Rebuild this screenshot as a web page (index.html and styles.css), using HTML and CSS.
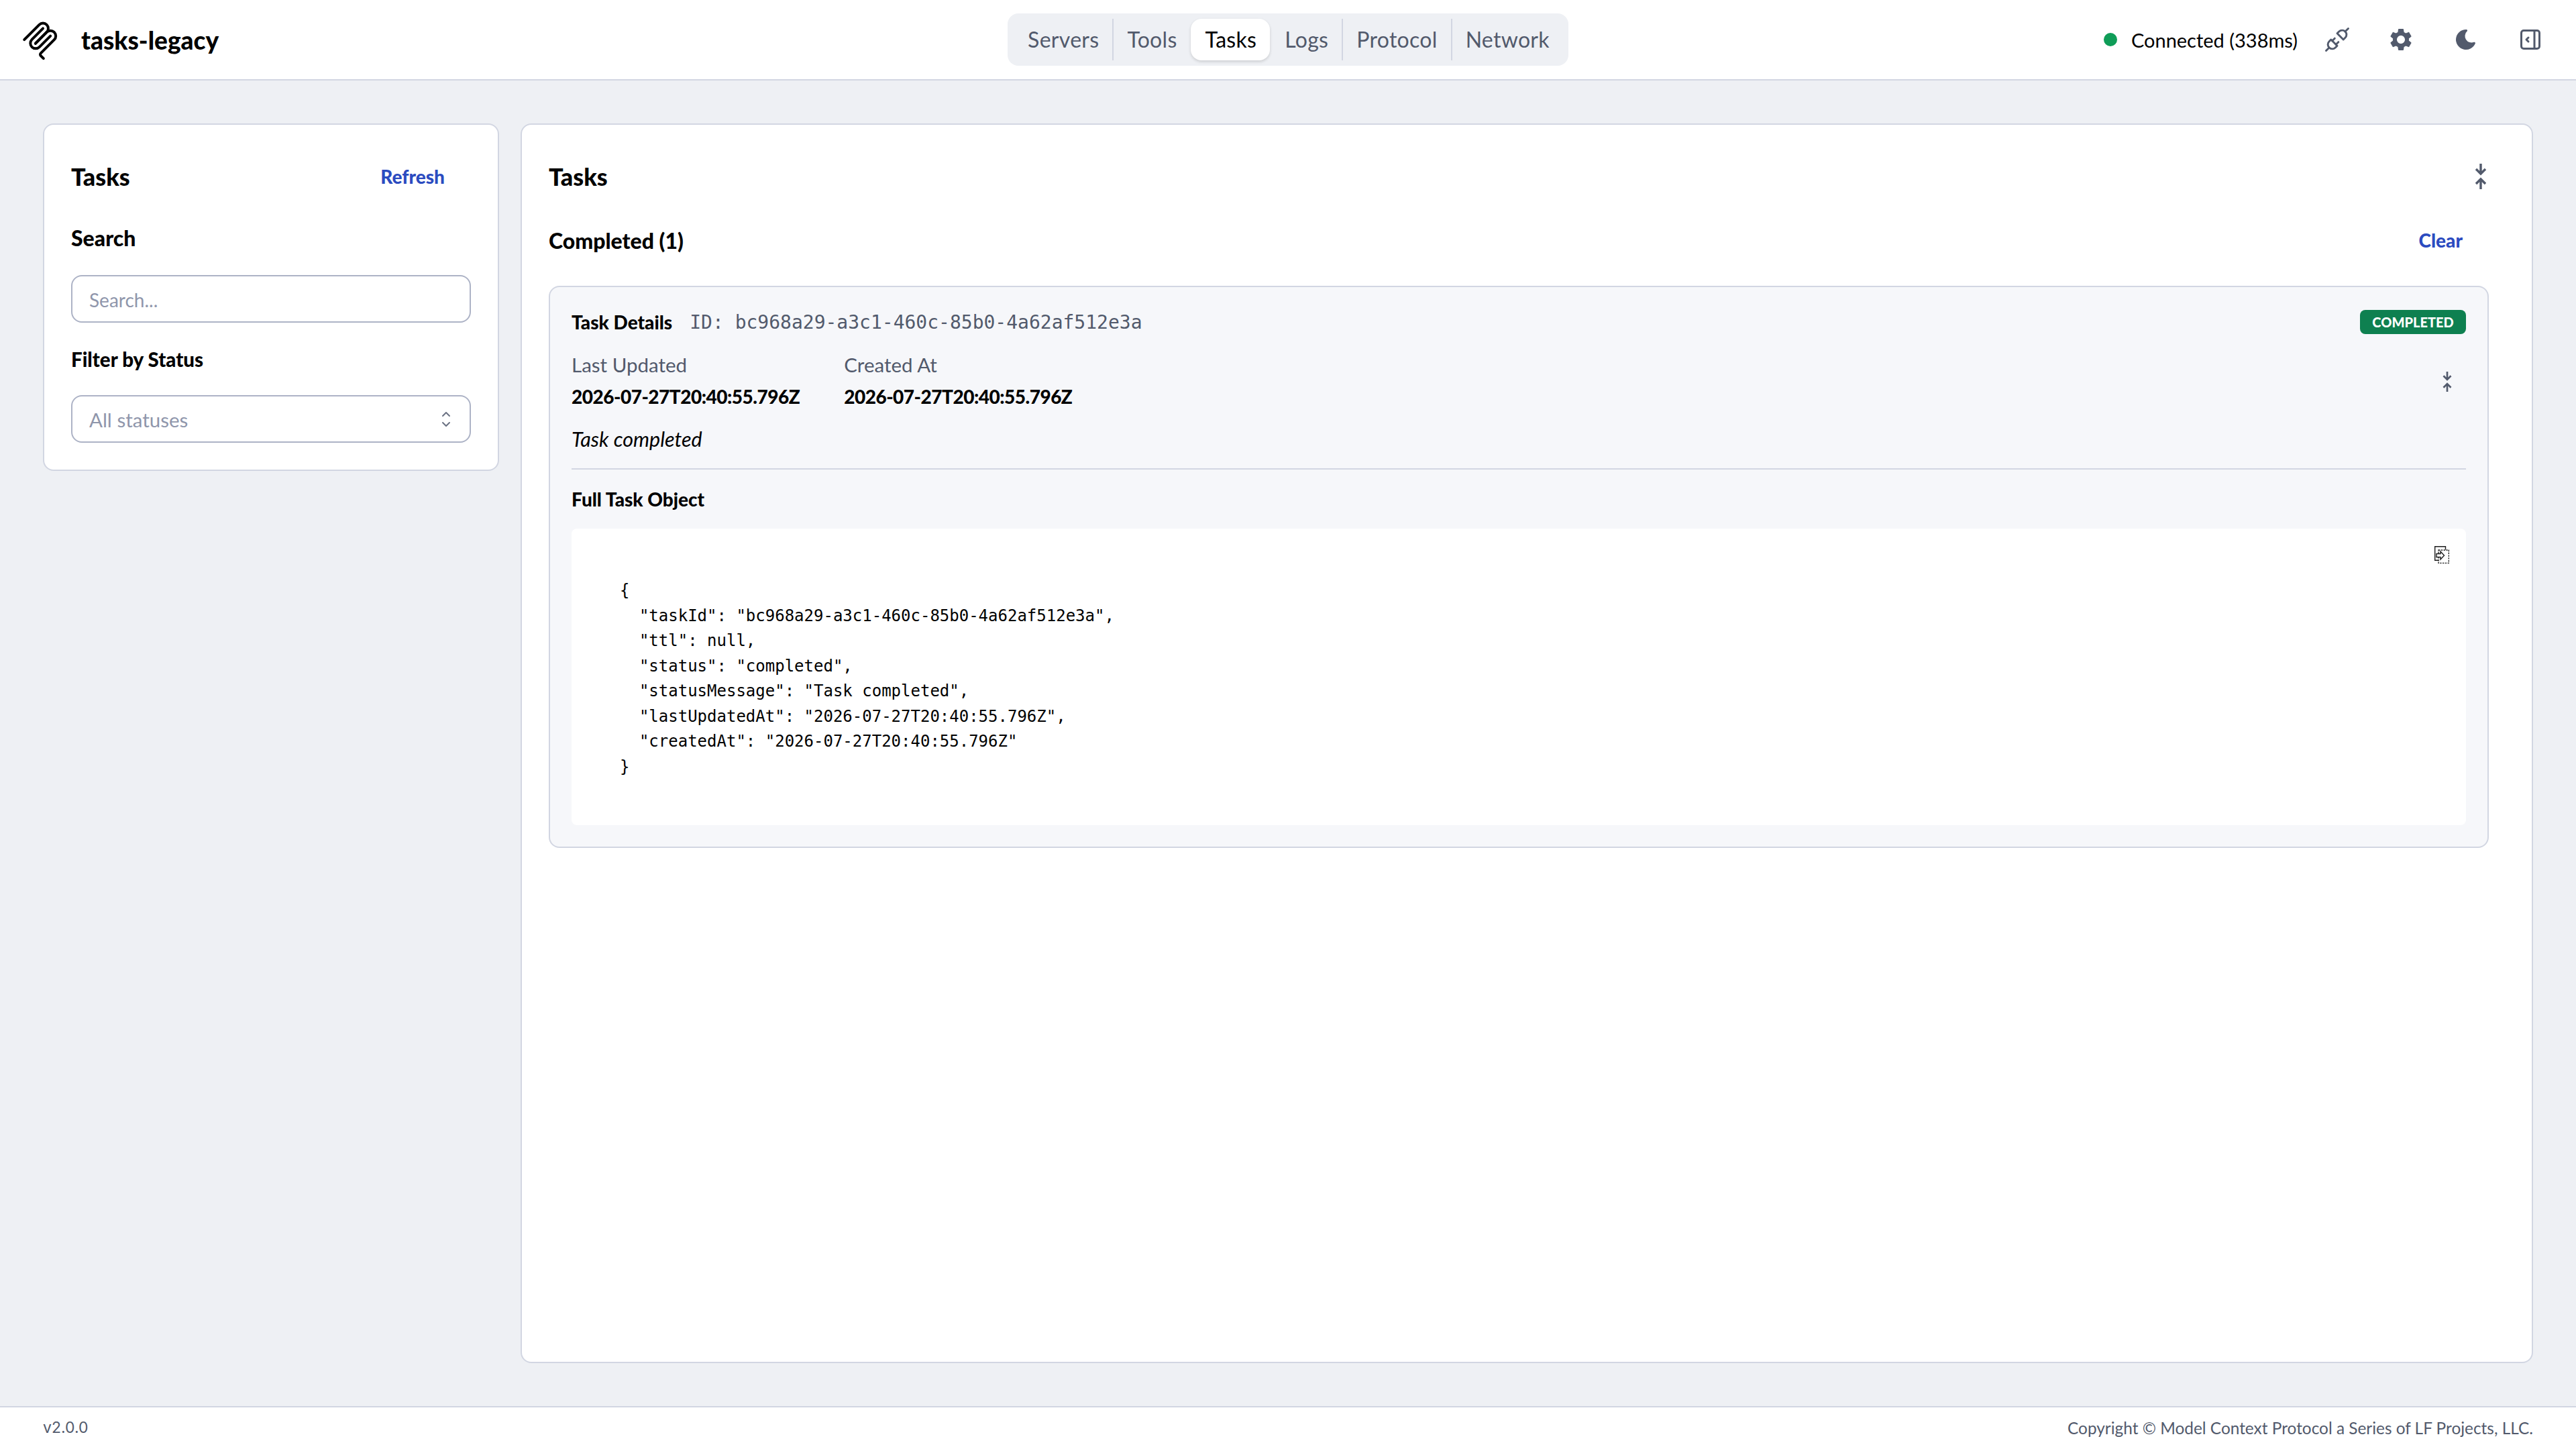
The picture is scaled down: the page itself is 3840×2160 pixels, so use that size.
FILE: index.html
```html
<!DOCTYPE html>
<html lang="en">
<head>
    <meta charset="UTF-8">
    <title>tasks-legacy</title>
    <link rel="stylesheet" href="styles.css">
</head>
<body>
    <header class="topbar">
        <div class="brand">
            <svg class="brand-logo" viewBox="0 0 195 195" fill="none" stroke="#000" stroke-width="12" stroke-linecap="round">
                <path d="M25 97.8528L92.8822 29.9706C102.255 20.598 117.451 20.598 126.823 29.9706C136.196 39.3431 136.196 54.5391 126.823 63.9117L75.5581 115.177"/>
                <path d="M76.2652 114.47L126.823 63.9117C136.196 54.5391 151.392 54.5391 160.765 63.9117L161.118 64.2652C170.491 73.6378 170.491 88.8338 161.118 98.2063L99.7248 159.6C96.6006 162.724 96.6006 167.789 99.7248 170.913L112.331 183.52"/>
                <path d="M109.853 46.9411L59.6482 97.1457C50.2757 106.518 50.2757 121.714 59.6482 131.087C69.0208 140.459 84.2168 140.459 93.5894 131.087L143.794 80.8822"/>
            </svg>
            <span class="brand-name">tasks-legacy</span>
        </div>
        <nav class="tabs">
            <span class="tab">Servers</span>
            <span class="tab tab--sep">Tools</span>
            <span class="tab tab--active">Tasks</span>
            <span class="tab">Logs</span>
            <span class="tab tab--sep">Protocol</span>
            <span class="tab tab--sep">Network</span>
        </nav>
        <div class="status">
            <span class="status-dot"></span>
            <span class="status-text">Connected (338ms)</span>
            <svg class="icon-plug" viewBox="0 0 24 24" fill="none" stroke="#525a6c" stroke-width="1.6" stroke-linecap="round" stroke-linejoin="round">
                <path d="M7 12l5 5l-1.5 1.5a3.536 3.536 0 1 1 -5 -5l1.5 -1.5z"/>
                <path d="M17 12l-5 -5l1.5 -1.5a3.536 3.536 0 1 1 5 5l-1.5 1.5z"/>
                <path d="M3 21l2.5 -2.5"/>
                <path d="M18.5 5.5l2.5 -2.5"/>
                <path d="M10 11l-2 2"/>
                <path d="M13 14l-2 2"/>
            </svg>
            <svg class="icon-gear" viewBox="0 0 24 24" fill="#525a6c">
                <path d="M19.14 12.94c.04-.3.06-.61.06-.94 0-.32-.02-.64-.07-.94l2.03-1.58c.18-.14.23-.41.12-.61l-1.92-3.32c-.12-.22-.37-.29-.59-.22l-2.39.96c-.5-.38-1.03-.7-1.62-.94l-.36-2.54c-.04-.24-.24-.41-.48-.41h-3.84c-.24 0-.43.17-.47.41l-.36 2.54c-.59.24-1.13.57-1.62.94l-2.39-.96c-.22-.08-.47 0-.59.22L2.74 8.87c-.12.21-.08.47.12.61l2.03 1.58c-.05.3-.09.63-.09.94s.02.64.07.94l-2.03 1.58c-.18.14-.23.41-.12.61l1.92 3.32c.12.22.37.29.59.22l2.39-.96c.5.38 1.03.7 1.62.94l.36 2.54c.05.24.24.41.48.41h3.84c.24 0 .44-.17.47-.41l.36-2.54c.59-.24 1.13-.56 1.62-.94l2.39.96c.22.08.47 0 .59-.22l1.92-3.32c.12-.22.07-.47-.12-.61l-2.01-1.58zM12 15.6c-1.98 0-3.6-1.62-3.6-3.6s1.62-3.6 3.6-3.6 3.6 1.62 3.6 3.6-1.62 3.6-3.6 3.6z"/>
            </svg>
            <svg class="icon-moon" viewBox="0 0 24 24" fill="#525a6c">
                <path d="M12 1.992a10 10 0 1 0 9.236 13.838c.341 -.82 -.476 -1.644 -1.298 -1.31a6.5 6.5 0 0 1 -6.864 -10.787l.077 -.08c.551 -.63 .113 -1.653 -.758 -1.653h-.266l-.127 -.008z"/>
            </svg>
            <svg class="icon-panel" viewBox="0 0 30 30" fill="none" stroke="#525a6c" stroke-width="3" stroke-linecap="round" stroke-linejoin="round">
                <rect x="1.5" y="1.5" width="27" height="27" rx="3.5"/>
                <path d="M21 1.5v27"/>
                <path d="M12 12l-3 3l3 3"/>
            </svg>
        </div>
    </header>

    <main class="page">
        <aside class="card sidebar">
            <div class="card-head">
                <h3 class="title">Tasks</h3>
                <span class="link-btn">Refresh</span>
            </div>
            <h4 class="search-label">Search</h4>
            <div class="field field--search">Search...</div>
            <h5 class="filter-label">Filter by Status</h5>
            <div class="field field--select">
                <span>All statuses</span>
                <svg class="chevrons" viewBox="0 0 14 24" fill="none" stroke="#6b7283" stroke-width="2" stroke-linecap="round" stroke-linejoin="round">
                    <path d="M2 7l5 -5l5 5"/>
                    <path d="M2 17l5 5l5 -5"/>
                </svg>
            </div>
        </aside>

        <section class="card content">
            <div class="card-head">
                <h3 class="title">Tasks</h3>
                <svg class="fold fold--big" viewBox="0 0 16 38" fill="none" stroke="#525a6c" stroke-width="3.4">
                    <path d="M8 0v15M1 8l7 7l7 -7"/>
                    <path d="M8 38v-15M1 30l7 -7l7 7"/>
                </svg>
            </div>
            <div class="group-head">
                <h4 class="group-title">Completed (1)</h4>
                <span class="link-btn">Clear</span>
            </div>
            <article class="task">
                <div class="task-top">
                    <span class="task-heading">Task Details</span>
                    <span class="task-id">ID: bc968a29-a3c1-460c-85b0-4a62af512e3a</span>
                    <span class="badge">COMPLETED</span>
                </div>
                <div class="task-meta">
                    <div class="meta-cols">
                        <div>
                            <p class="meta-label">Last Updated</p>
                            <p class="meta-value">2026-07-27T20:40:55.796Z</p>
                        </div>
                        <div>
                            <p class="meta-label">Created At</p>
                            <p class="meta-value">2026-07-27T20:40:55.796Z</p>
                        </div>
                    </div>
                    <svg class="fold fold--small" viewBox="0 0 16 38" fill="none" stroke="#525a6c" stroke-width="3.4">
                        <path d="M8 0v15M1 8l7 7l7 -7"/>
                        <path d="M8 38v-15M1 30l7 -7l7 7"/>
                    </svg>
                </div>
                <p class="task-message">Task completed</p>
                <hr class="divider">
                <p class="object-title">Full Task Object</p>
                <div class="code-box">
                    <svg class="copy-icon" viewBox="0 0 22 26" fill="none" stroke="#1c1c1c" stroke-width="1.4">
                        <path d="M16.5 5.5V.7H.7v20.6H6"/>
                        <path d="M6 6h15.4v19.4H6z" stroke-dasharray="2.4 1.4"/>
                        <path d="M3 11.5h6V8l5.5 6l-5.5 6v-3.5H3z" fill="#fff"/>
                    </svg>
<pre class="code">{
  "taskId": "bc968a29-a3c1-460c-85b0-4a62af512e3a",
  "ttl": null,
  "status": "completed",
  "statusMessage": "Task completed",
  "lastUpdatedAt": "2026-07-27T20:40:55.796Z",
  "createdAt": "2026-07-27T20:40:55.796Z"
}</pre>
                </div>
            </article>
        </section>
    </main>

    <footer class="footer">
        <span class="version">v2.0.0</span>
        <span class="copyright">Copyright © Model Context Protocol a Series of LF Projects, LLC.</span>
    </footer>
</body>
</html>
```
FILE: styles.css
```css
* {
    box-sizing: border-box;
}
body {
    margin: 0;
    height: 100vh;
    display: flex;
    flex-direction: column;
    background-color: #eef0f4;
    color: #000;
    font-family: "Lato", "Open Sans", sans-serif;
    font-size: 28px;
}
h3, h4, h5, p {
    margin: 0;
}

/* top bar */
.topbar {
    height: 120px;
    flex: none;
    display: grid;
    grid-template-columns: 1fr auto 1fr;
    align-items: center;
    padding: 0 28px;
    background-color: #fff;
    border-bottom: 2px solid #d2d6e2;
}
.brand {
    display: flex;
    align-items: center;
    gap: 29px;
}
.brand-logo {
    width: 64px;
    height: 64px;
}
.brand-name {
    font-size: 37px;
    font-weight: 900;
}
.tabs {
    display: flex;
    align-items: center;
    height: 78px;
    padding: 8px;
    background-color: #eef0f4;
    border-radius: 16px;
    color: #525a6c;
    font-size: 32px;
    letter-spacing: 0.3px;
}
.tab {
    height: 62px;
    line-height: 62px;
    padding: 0 20px;
    border-left: 2px solid transparent;
}
.tab--sep {
    border-left-color: #d2d6e2;
}
.tab--active {
    background-color: #fff;
    color: #000;
    border-radius: 16px;
    box-shadow: 0 2px 4px rgba(0, 0, 0, 0.15);
}
.status {
    display: flex;
    align-items: center;
    justify-content: flex-end;
    padding-right: 25px;
}
.status-dot {
    width: 20px;
    height: 20px;
    border-radius: 50%;
    background-color: #0f9d58;
}
.status-text {
    margin-left: 21px;
    font-size: 29px;
}
.icon-plug {
    width: 44px;
    height: 44px;
    margin-left: 37px;
}
.icon-gear {
    width: 40px;
    height: 40px;
    margin-left: 53px;
}
.icon-moon {
    width: 36px;
    height: 36px;
    margin-left: 59px;
}
.icon-panel {
    width: 30px;
    height: 30px;
    margin-left: 63px;
}

/* page */
.page {
    flex: 1;
    min-height: 0;
    display: grid;
    grid-template-columns: 680px 1fr;
    gap: 32px;
    padding: 64px;
}
.card {
    background-color: #fff;
    border: 2px solid #d2d6e2;
    border-radius: 16px;
    padding: 40px;
}
.sidebar {
    align-self: start;
}
.card-head {
    height: 74px;
    display: flex;
    align-items: center;
    justify-content: space-between;
}
.title {
    font-size: 36px;
    font-weight: 900;
}
.link-btn {
    color: #2b4bc0;
    font-size: 28px;
    font-weight: 900;
    padding-right: 39px;
}
.search-label {
    margin-top: 30px;
    font-size: 32px;
    font-weight: 900;
    line-height: 50px;
}
.filter-label {
    margin-top: 33px;
    font-size: 29.5px;
    font-weight: 900;
    line-height: 44px;
}
.field {
    height: 71px;
    display: flex;
    align-items: center;
    justify-content: space-between;
    padding: 0 28px 0 25px;
    border: 2px solid #adb3c6;
    border-radius: 16px;
    color: #8f96ab;
    font-size: 28px;
}
.field--search {
    margin-top: 30px;
    padding-top: 3px;
}
.field--select {
    margin-top: 31px;
    padding-top: 2px;
    font-size: 29.5px;
}
.chevrons {
    width: 14px;
    height: 24px;
    margin-top: -2px;
}

/* tasks panel */
.content {
    padding-right: 64px;
}
.fold--big {
    width: 16px;
    height: 38px;
    margin-right: 4px;
}
.fold--small {
    width: 14px;
    height: 30px;
    margin: 32px 21px 0 0;
}
.group-head {
    height: 72px;
    margin-top: 22px;
    display: flex;
    align-items: center;
    justify-content: space-between;
}
.group-title {
    font-size: 32px;
    font-weight: 900;
}
.task {
    margin-top: 32px;
    padding: 32px;
    background-color: #f6f7fa;
    border: 2px solid #d2d6e2;
    border-radius: 16px;
}
.task-top {
    height: 40px;
    display: flex;
    align-items: center;
}
.task-heading {
    font-weight: 900;
}
.task-id {
    margin-left: 26px;
    color: #525a6c;
    font-family: "DejaVu Sans Mono", monospace;
    font-size: 28px;
}
.badge {
    margin-left: auto;
    width: 158px;
    height: 36px;
    line-height: 36px;
    text-align: center;
    background-color: #0e8050;
    border-radius: 8px;
    color: #fff;
    font-size: 20px;
    font-weight: 900;
}
.task-meta {
    margin-top: 22px;
    display: flex;
    justify-content: space-between;
    align-items: flex-start;
}
.meta-cols {
    display: flex;
    gap: 66px;
}
.meta-label {
    color: #525a6c;
    font-size: 29.5px;
    line-height: 44px;
}
.meta-value {
    margin-top: 3px;
    font-weight: 900;
    line-height: 44px;
    letter-spacing: -0.5px;
}
.task-message {
    margin-top: 19px;
    font-size: 30.5px;
    font-style: italic;
    line-height: 44px;
}
.divider {
    margin: 22px 0 0;
    border: none;
    border-top: 2px solid #d2d6e2;
}
.object-title {
    margin-top: 22px;
    font-weight: 900;
    line-height: 44px;
}
.code-box {
    position: relative;
    margin-top: 22px;
    height: 442px;
    padding: 74px 72px;
    background-color: #fff;
    border-radius: 8px;
}
.copy-icon {
    position: absolute;
    top: 26px;
    right: 25px;
    width: 22px;
    height: 26px;
}
.code {
    margin: 0;
    font-family: "DejaVu Sans Mono", monospace;
    font-size: 24px;
    line-height: 37.5px;
}

/* footer */
.footer {
    height: 64px;
    flex: none;
    display: flex;
    align-items: center;
    justify-content: space-between;
    padding: 0 64px 2px;
    background-color: #fff;
    border-top: 2px solid #d2d6e2;
    color: #525a6c;
    font-size: 24.4px;
}
.version {
    font-family: "Inter", sans-serif;
    font-size: 23px;
}
```
